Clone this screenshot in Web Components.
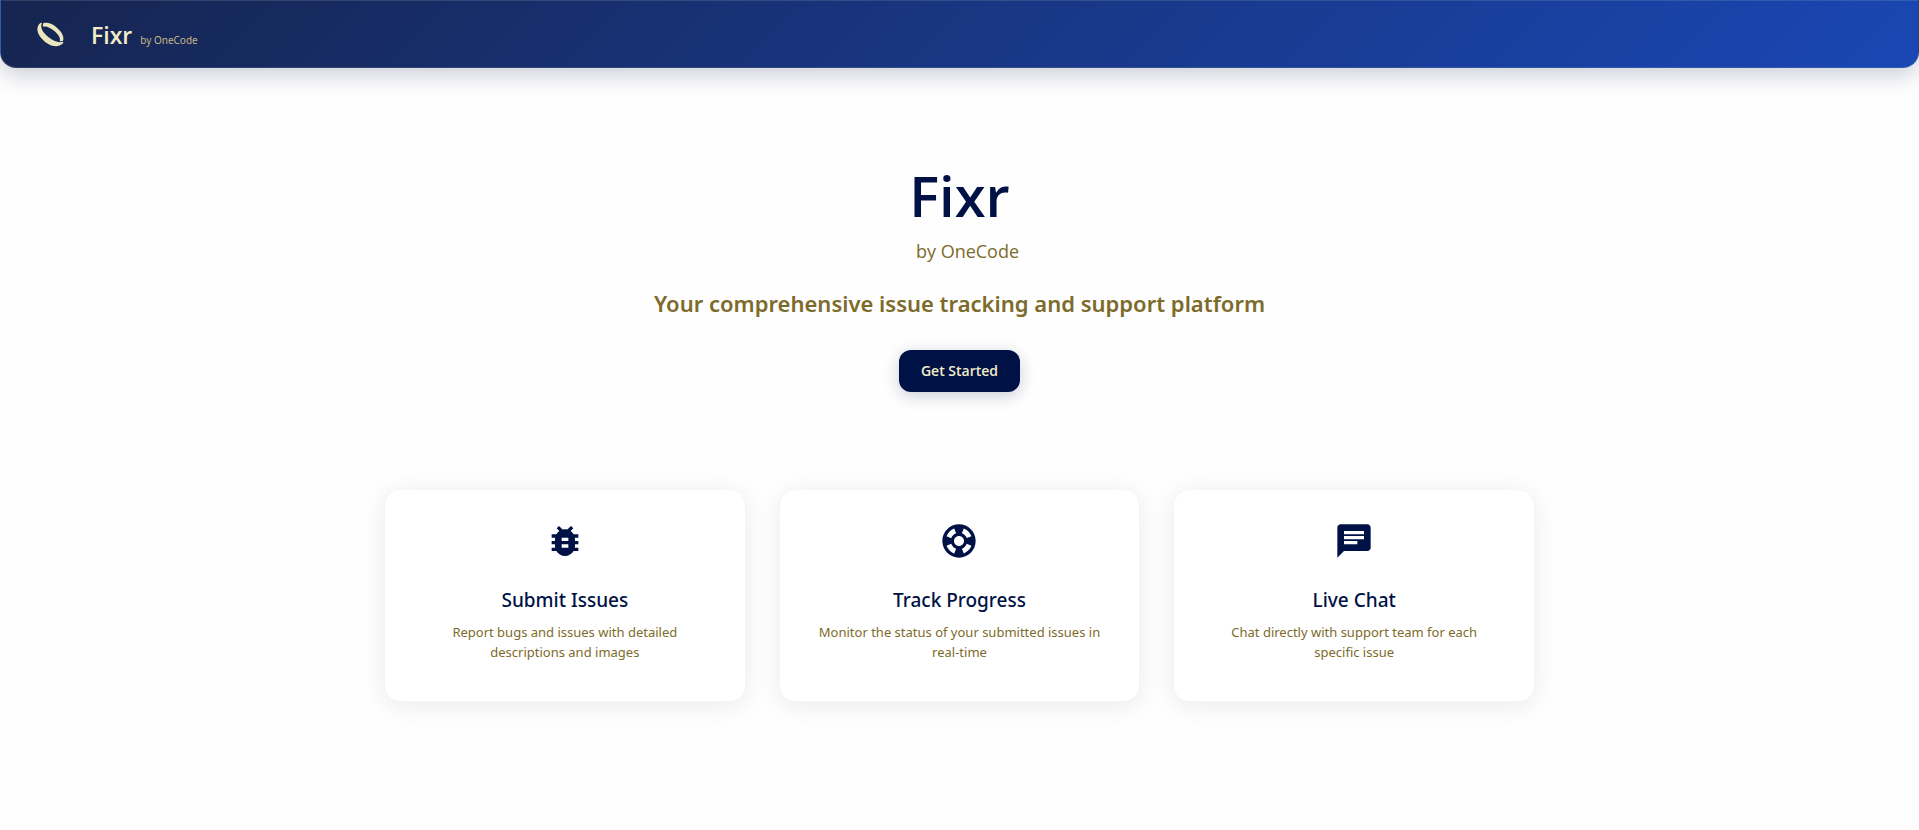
<!DOCTYPE html>
<html lang="en">
<head>
<meta charset="utf-8">
<meta name="viewport" content="width=device-width, initial-scale=1">
<title>Fixr by OneCode</title>
<style>
  :root { --navy: #001245; --gold: #7d6b2a; --cream: #f3ecc8; --display: "Open Sans", "Noto Sans", sans-serif; }
  body { margin: 0; background: #fefefe; font-family: "Noto Sans", sans-serif; }
</style>
</head>
<body>
<fixr-app></fixr-app>

<template id="app">
  <style>
    :host { display: block; }
    main { display: flex; flex-direction: column; align-items: center; padding: 96px 24px; gap: 97px; }
    section { display: grid; grid-template-columns: repeat(auto-fit, minmax(280px, 1fr)); gap: 33px; width: 100%; max-width: 1151px; }
  </style>
  <fixr-header></fixr-header>
  <main>
    <fixr-hero></fixr-hero>
    <section>
      <feature-card>
        <svg slot="icon" viewBox="0 0 24 24" width="40" height="40" aria-hidden="true"><path fill="currentColor" d="M20 8h-2.81c-.45-.78-1.07-1.45-1.82-1.96L17 4.41 15.59 3l-2.17 2.17C12.96 5.06 12.49 5 12 5s-.96.06-1.41.17L8.41 3 7 4.41l1.62 1.63C7.88 6.55 7.26 7.22 6.81 8H4v2h2.09c-.05.33-.09.66-.09 1v1H4v2h2v1c0 .34.04.67.09 1H4v2h2.81c1.04 1.79 2.97 3 5.19 3s4.15-1.21 5.19-3H20v-2h-2.09c.05-.33.09-.66.09-1v-1h2v-2h-2v-1c0-.34-.04-.67-.09-1H20V8zm-6 8h-4v-2h4v2zm0-4h-4v-2h4v2z"/></svg>
        <span slot="title">Submit Issues</span>
        Report bugs and issues with detailed descriptions and images
      </feature-card>
      <feature-card>
        <svg slot="icon" viewBox="0 0 24 24" width="40" height="40" aria-hidden="true"><path fill="currentColor" d="M12 2C6.48 2 2 6.48 2 12s4.48 10 10 10 10-4.480 10-10S17.520 2 12 2zm7.460 7.120l-2.780 1.150c-.51-1.360-1.580-2.440-2.950-2.940l1.150-2.780c2.100.8 3.770 2.470 4.580 4.570zM12 15c-1.660 0-3-1.340-3-3s1.340-3 3-3 3 1.340 3 3-1.340 3-3 3zM9.130 4.540l1.170 2.780c-1.380.5-2.470 1.590-2.980 2.970L4.540 9.130c.81-2.110 2.480-3.780 4.590-4.590zM4.540 14.870l2.780-1.150c.51 1.380 1.590 2.460 2.970 2.960l-1.170 2.780c-2.100-.81-3.770-2.480-4.580-4.590zm10.340 4.590l-1.150-2.780c1.370-.51 2.450-1.590 2.950-2.970l2.780 1.170c-.81 2.100-2.480 3.770-4.580 4.580z"/></svg>
        <span slot="title">Track Progress</span>
        Monitor the status of your submitted issues in real-time
      </feature-card>
      <feature-card>
        <svg slot="icon" viewBox="0 0 24 24" width="40" height="40" aria-hidden="true"><path fill="currentColor" d="M20 2H4c-1.100 0-1.990.9-1.990 2L2 22l4-4h14c1.100 0 2-.9 2-2V4c0-1.100-.9-2-2-2zM6 9h12v2H6V9zm8 5H6v-2h8v2zm4-6H6V6h12v2z"/></svg>
        <span slot="title">Live Chat</span>
        Chat directly with support team for each specific issue
      </feature-card>
    </section>
  </main>
</template>

<template id="header">
  <style>
    :host { display: block; }
    header { box-sizing: border-box; height: 68px; display: flex; align-items: center; padding: 2px 32px 0;
      border: 1px solid rgba(243, 236, 200, .12); border-radius: 0 0 16px 16px;
      background: linear-gradient(135deg, #162550 0%, #1a47b4 100%);
      box-shadow: 0 6px 24px rgba(0, 18, 69, .22); }
    a { display: flex; align-items: center; gap: 24px; color: var(--cream); text-decoration: none; }
    svg { display: block; }
    .name { display: flex; align-items: baseline; gap: 8px; }
    strong { font-family: var(--display); font-size: 23px; line-height: 32px; font-weight: 600; }
    small { font-size: 10px; line-height: 16px; color: #c4b783; }
  </style>
  <header>
    <a href="#">
      <svg viewBox="-3 -3 102 102" width="34" height="34" aria-hidden="true">
        <g fill="#ebe6bd">
          <path d="M21 11C5 20 7 42 25 61c18 20 46 29 62 12 2-3 1-4-2-4-18 3-38-9-51-23C23 34 19 23 24 12z"/>
          <path d="M29 12c18-5 38 9 50 25 10 13 11 24 7 30h-9c4-9-4-22-17-32-12-10-24-15-32-12-2-3-2-8 1-11z"/>
        </g>
      </svg>
      <span class="name"><strong>Fixr</strong><small>by OneCode</small></span>
    </a>
  </header>
</template>

<template id="hero">
  <style>
    :host { display: flex; flex-direction: column; align-items: center; text-align: center; }
    h1 { margin: 0; color: var(--navy); font-family: var(--display); font-size: 56px; line-height: 62px; font-weight: 600; }
    h1 small { display: block; margin: 9px 0 0 16px; color: var(--gold); font-size: 18px; line-height: 32px; font-weight: 400; }
    p { margin: 18px 0 29px; color: var(--gold); font-size: 22px; line-height: 36px; font-weight: 600; }
    button { height: 42px; padding: 0 22px; border: 0; border-radius: 12px; background: var(--navy); color: var(--cream);
      font-family: var(--display); font-size: 14px; font-weight: 600; line-height: 24px; box-shadow: 0 4px 16px rgba(0, 18, 69, .2); cursor: pointer; }
  </style>
  <h1>Fixr <small>by OneCode</small></h1>
  <p>Your comprehensive issue tracking and support platform</p>
  <button type="button">Get Started</button>
</template>

<template id="card">
  <style>
    :host { display: block; }
    article { box-sizing: border-box; height: 100%; padding: 31px 36px; display: flex; flex-direction: column; align-items: center;
      text-align: center; background: #fff; border: 1px solid #f8f5ee; border-radius: 16px; box-shadow: 0 4px 24px rgba(0, 18, 69, .08); }
    ::slotted(svg) { display: block; color: var(--navy); }
    h2 { margin: 23px 0 6px; color: var(--navy); font-size: 19px; line-height: 32px; font-weight: 500; }
    p { margin: 0 0 8px; color: var(--gold); font-size: 13px; line-height: 20px; }
  </style>
  <article>
    <slot name="icon"></slot>
    <h2><slot name="title"></slot></h2>
    <p><slot></slot></p>
  </article>
</template>

<script>
  const define = (tag, id) => customElements.define(tag, class extends HTMLElement {
    constructor() {
      super();
      this.attachShadow({ mode: 'open' }).append(document.getElementById(id).content.cloneNode(true));
    }
  });
  define('feature-card', 'card');
  define('fixr-hero', 'hero');
  define('fixr-header', 'header');
  define('fixr-app', 'app');
</script>
</body>
</html>
